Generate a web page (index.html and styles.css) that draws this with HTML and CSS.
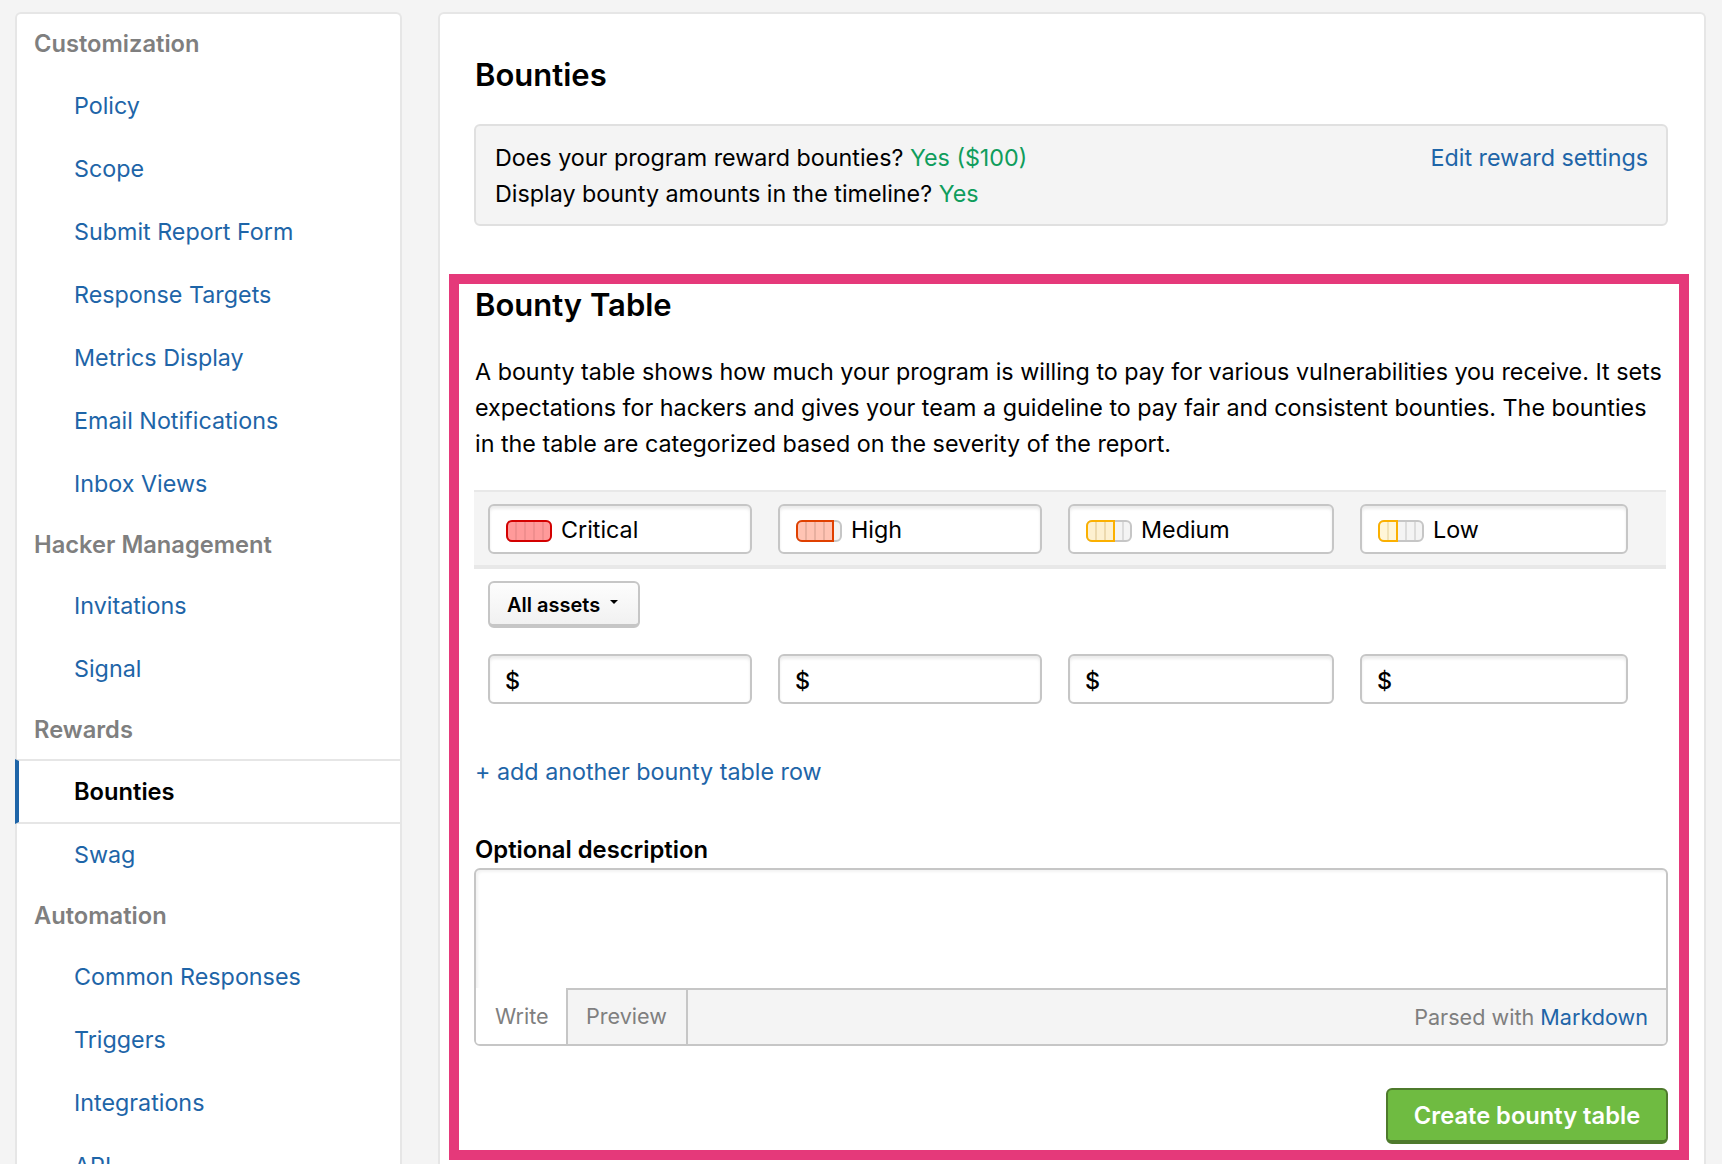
FILE: index.html
```html
<!DOCTYPE html>
<html lang="en">
<head>
<meta charset="utf-8">
<title>Bounties</title>
<link rel="stylesheet" href="styles.css">
</head>
<body>
<div class="page">
  <nav class="sidebar">
    <div class="nav-head nav-head-first">Customization</div>
    <a class="nav-item">Policy</a>
    <a class="nav-item">Scope</a>
    <a class="nav-item">Submit Report Form</a>
    <a class="nav-item">Response Targets</a>
    <a class="nav-item">Metrics Display</a>
    <a class="nav-item">Email Notifications</a>
    <a class="nav-item">Inbox Views</a>
    <div class="nav-head">Hacker Management</div>
    <a class="nav-item">Invitations</a>
    <a class="nav-item">Signal</a>
    <div class="nav-head">Rewards</div>
    <a class="nav-item nav-active">Bounties</a>
    <a class="nav-item">Swag</a>
    <div class="nav-head">Automation</div>
    <a class="nav-item">Common Responses</a>
    <a class="nav-item">Triggers</a>
    <a class="nav-item">Integrations</a>
    <a class="nav-item">API</a>
  </nav>
  <main class="main">
    <section class="intro">
      <h1 class="title">Bounties</h1>
      <div class="info">
        <div class="info-text">
          <div>Does your program reward bounties? <span class="yes">Yes ($100)</span></div>
          <div>Display bounty amounts in the timeline? <span class="yes">Yes</span></div>
        </div>
        <a class="link">Edit reward settings</a>
      </div>
    </section>
    <section class="highlight">
      <h2 class="title title-table">Bounty Table</h2>
      <p class="lead">A bounty table shows how much your program is willing to pay for various vulnerabilities you receive. It sets expectations for hackers and gives your team a guideline to pay fair and consistent bounties. The bounties in the table are categorized based on the severity of the report.</p>
      <div class="severity-band">
        <div class="cols">
          <div class="field">
            <svg class="meter" viewBox="0 0 46 22"><rect class="m-track" x="1" y="1" width="44" height="20" rx="5"/><rect class="crit-fill" x="1" y="1" width="44" height="20" rx="5"/><path class="crit-div" d="M10 2V20M19 2V20M28 2V20M37 2V20"/><rect class="crit-line" x="1" y="1" width="44" height="20" rx="5"/></svg>
            <span class="sev-name">Critical</span>
          </div>
          <div class="field">
            <svg class="meter" viewBox="0 0 46 22"><rect class="m-track" x="1" y="1" width="44" height="20" rx="5"/><path class="high-fill" d="M6 1H37V21H6A5 5 0 0 1 1 16V6A5 5 0 0 1 6 1Z"/><path class="high-div" d="M10 2V20M19 2V20M28 2V20"/><path class="high-line" d="M6 1H37V21H6A5 5 0 0 1 1 16V6A5 5 0 0 1 6 1Z"/></svg>
            <span class="sev-name">High</span>
          </div>
          <div class="field">
            <svg class="meter" viewBox="0 0 46 22"><rect class="m-track" x="1" y="1" width="44" height="20" rx="5"/><path class="m-div" d="M37 2V20"/><path class="med-fill" d="M6 1H28V21H6A5 5 0 0 1 1 16V6A5 5 0 0 1 6 1Z"/><path class="med-div" d="M10 2V20M19 2V20"/><path class="yel-line" d="M6 1H28V21H6A5 5 0 0 1 1 16V6A5 5 0 0 1 6 1Z"/></svg>
            <span class="sev-name">Medium</span>
          </div>
          <div class="field">
            <svg class="meter" viewBox="0 0 46 22"><rect class="m-track" x="1" y="1" width="44" height="20" rx="5"/><path class="m-div" d="M28 2V20M37 2V20"/><path class="low-fill" d="M6 1H19V21H6A5 5 0 0 1 1 16V6A5 5 0 0 1 6 1Z"/><path class="low-div" d="M10 2V20"/><path class="yel-line" d="M6 1H19V21H6A5 5 0 0 1 1 16V6A5 5 0 0 1 6 1Z"/></svg>
            <span class="sev-name">Low</span>
          </div>
        </div>
      </div>
      <div class="asset-row">
        <button class="asset-btn">All assets<span class="caret"></span></button>
      </div>
      <div class="cols amounts">
        <div class="field money">$</div>
        <div class="field money">$</div>
        <div class="field money">$</div>
        <div class="field money">$</div>
      </div>
      <a class="link add-row">+ add another bounty table row</a>
      <label class="desc-label">Optional description</label>
      <div class="editor">
        <div class="editor-area"></div>
        <div class="editor-bar">
          <span class="tab tab-on">Write</span>
          <span class="tab tab-off">Preview</span>
          <span class="parsed">Parsed with <a class="link">Markdown</a></span>
        </div>
      </div>
      <div class="actions">
        <button class="create">Create bounty table</button>
      </div>
    </section>
  </main>
</div>
</body>
</html>
```

FILE: styles.css
```css
* { box-sizing: border-box; }
html, body { margin: 0; height: 1164px; overflow: hidden; }
body {
  background: #f4f4f4;
  color: #000;
  font-family: Inter, "Liberation Sans", sans-serif;
  font-size: 23.3px;
  line-height: 36px;
}
.page {
  display: flex;
  gap: 36px;
  height: 1164px;
  padding: 12px 16px 0 15px;
  overflow: hidden;
}
.sidebar {
  flex: 0 0 387px;
  height: 1200px;
  background: #fff;
  border: 2px solid #e6e6e6;
  border-bottom: 0;
  border-radius: 6px 6px 0 0;
}
.nav-head {
  height: 59px;
  padding-left: 17px;
  line-height: 59px;
  color: #7f7f7f;
  font-size: 23.7px;
  font-weight: 600;
}
.nav-head-first { height: 59.5px; line-height: 60px; }
.nav-item {
  display: block;
  height: 63px;
  padding-left: 57px;
  line-height: 63px;
  color: #1e65a8;
}
.nav-active {
  height: 65px;
  margin-bottom: -0.5px;
  margin-left: -2px;
  padding-left: 55px;
  border-left: 4px solid #1e65a8;
  border-top: 2px solid #e6e6e6;
  border-bottom: 2px solid #e6e6e6;
  color: #000;
  font-size: 23.7px;
  font-weight: 600;
  line-height: 61px;
}
.main {
  flex: 1;
  height: 1200px;
  padding: 0 15px 0 9px;
  background: #fff;
  border: 2px solid #e6e6e6;
  border-bottom: 0;
  border-radius: 6px 6px 0 0;
}
.intro { padding: 0 21px 0 25px; }
.title {
  margin: 0;
  padding-left: 1px;
  font-size: 31px;
  font-weight: 600;
  line-height: 40px;
}
.intro .title { padding-top: 41px; }
.info {
  display: flex;
  justify-content: space-between;
  height: 102px;
  margin-top: 29px;
  padding: 14px 18px 0 19px;
  background: #f4f4f4;
  border: 2px solid #e0e0e0;
  border-radius: 6px;
}
.yes { color: #0f9d5c; }
.link { color: #1e65a8; }
.highlight {
  height: 886px;
  margin-top: 48px;
  padding: 0 11px 0 15px;
  border: 10px solid #e5397a;
}
.title-table { padding-top: 1px; }
.lead { margin: 29px 0 0; padding-left: 1px; }
.severity-band {
  height: 79px;
  margin-top: 28px;
  padding-top: 12px;
  margin-right: 2px;
  padding-left: 14px;
  background: #f4f4f4;
  border-top: 2px solid #e8e8e8;
  border-bottom: 4px solid #e8e8e8;
}
.cols {
  display: grid;
  grid-template-columns: 264px 264px 266px 268px;
  column-gap: 26px;
}
.field {
  display: flex;
  align-items: center;
  gap: 9px;
  height: 50px;
  padding-left: 16px;
  background: #fff;
  border: 2px solid #c6c6c6;
  border-radius: 6px;
  box-shadow: inset 0 3px 3px rgba(0, 0, 0, 0.08);
}
.sev-name { padding-top: 1px; }
.meter { width: 46px; height: 22px; flex: none; margin-top: 4px; }
.meter rect, .meter path { stroke-width: 2; fill: none; }
.meter .m-track { fill: #f4f4f4; stroke: #c6c6c6; }
.meter .m-div { stroke: #dcdcdc; }
.meter .crit-fill { fill: #ff9a9a; }
.meter .crit-div { stroke: #f08e8e; }
.meter .crit-line { stroke: #d40000; }
.meter .high-fill { fill: #ffc4b4; }
.meter .high-div { stroke: #e8b0a0; }
.meter .high-line { stroke: #e04000; }
.meter .med-fill { fill: #fdf0d0; }
.meter .med-div { stroke: #ecd9ae; }
.meter .low-fill { fill: #fff6d8; }
.meter .low-div { stroke: #f0e2b8; }
.meter .yel-line { stroke: #fbb000; }
.asset-row { padding: 12px 0 0 14px; height: 85px; }
.asset-btn {
  display: flex;
  align-items: center;
  gap: 10px;
  width: 152px;
  height: 47px;
  padding: 2px 0 0 17px;
  color: #000;
  font: 600 20px Inter, "Liberation Sans", sans-serif;
  background: linear-gradient(#fdfdfd, #f1f1f1);
  border: 2px solid #c6c6c6;
  border-bottom-width: 4px;
  border-radius: 6px;
}
.caret {
  margin-bottom: 5px;
  border-left: 4px solid transparent;
  border-right: 4px solid transparent;
  border-top: 4px solid #000;
}
.amounts { margin-left: 14px; }
.money { font-weight: 500; padding-left: 15px; padding-top: 4px; }
.add-row { display: block; margin-top: 50px; padding-left: 1px; }
.desc-label { display: block; margin-top: 42px; padding-left: 1px; font-size: 23.8px; font-weight: 600; }
.editor {
  height: 178px;
  margin-top: 0;
  background: #fff;
  border: 2px solid #c6c6c6;
  border-radius: 6px;
  box-shadow: inset 2px 2px 3px rgba(0, 0, 0, 0.05);
  overflow: hidden;
}
.editor-area { height: 118px; }
.editor-bar {
  display: flex;
  align-items: center;
  height: 56px;
  color: #7f7f7f;
  font-size: 21.6px;
  background: #f4f4f4;
  border-top: 2px solid #c6c6c6;
}
.tab { height: 54px; line-height: 53px; padding: 0 18px; }
.tab-on {
  width: 92px;
  margin-top: -2px;
  height: 56px;
  line-height: 57px;
  padding-left: 19px;
  background: #fff;
  border-right: 2px solid #c6c6c6;
}
.tab-off { width: 120px; border-right: 2px solid #c6c6c6; }
.parsed { margin-left: auto; padding-right: 18px; }
.actions { display: flex; justify-content: flex-end; margin-top: 42px; }
.create {
  width: 282px;
  height: 56px;
  padding: 0;
  color: #fff;
  font: 600 23.7px Inter, "Liberation Sans", sans-serif;
  background: #6fbb41;
  border: 2px solid #4e7a2c;
  border-bottom-width: 4px;
  border-radius: 6px;
}
```
